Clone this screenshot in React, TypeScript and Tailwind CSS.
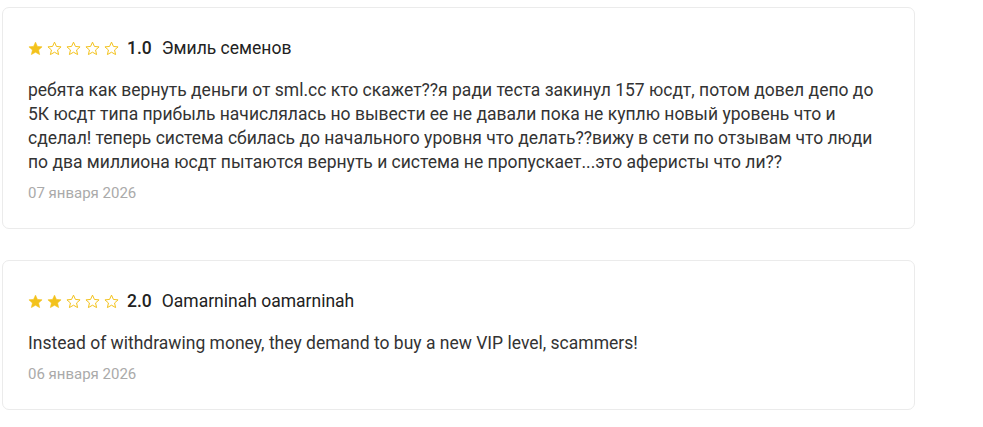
import React from "react";

const Star = ({ filled }: { filled: boolean }) => (
  <svg width="15" height="15" viewBox="0 0 24 24" className="block">
    <path
      d="M12 1.8l3.09 6.88 7.41.7-5.6 4.98 1.64 7.34L12 17.9l-6.54 3.8 1.64-7.34-5.6-4.98 7.41-.7z"
      fill={filled ? "#f3c21c" : "none"}
      stroke="#f3c21c"
      strokeWidth={filled ? 1 : 1.6}
      strokeLinejoin="round"
    />
  </svg>
);

type Review = { rating: number; name: string; text: string; date: string };

const reviews: Review[] = [
  {
    rating: 1,
    name: "Эмиль семенов",
    text: "ребята как вернуть деньги от sml.cc кто скажет??я ради теста закинул 157 юсдт, потом довел депо до 5К юсдт типа прибыль начислялась но вывести ее не давали пока не куплю новый уровень что и сделал! теперь система сбилась до начального уровня что делать??вижу в сети по отзывам что люди по два миллиона юсдт пытаются вернуть и система не пропускает...это аферисты что ли??",
    date: "07 января 2026",
  },
  {
    rating: 2,
    name: "Oamarninah oamarninah",
    text: "Instead of withdrawing money, they demand to buy a new VIP level, scammers!",
    date: "06 января 2026",
  },
];

export default function App() {
  return (
    <div
      className="min-h-[427px] bg-white pl-[2px] pt-[7px]"
      style={{ fontFamily: "Roboto, 'Noto Sans', sans-serif" }}
    >
      <div className="flex w-[913px] flex-col gap-[31px]">
        {reviews.map((r, i) => (
          <div
            key={i}
            className="rounded-[7px] border border-[#ebebeb] bg-white px-[25px] pb-[25px] pt-[28px]"
          >
            <div className="flex h-[24px] items-center">
              <div className="flex items-center gap-[4px]">
                {[1, 2, 3, 4, 5].map((n) => (
                  <Star key={n} filled={n <= r.rating} />
                ))}
              </div>
              <span className="ml-[8px] text-[17.5px] font-medium text-[#222]">
                {r.rating.toFixed(1)}
              </span>
              <span className="ml-[10px] text-[17.5px] text-[#222]">
                {r.name}
              </span>
            </div>
            <p className="mt-[18px] text-[17.5px] leading-[24px] text-[#333]">
              {r.text}
            </p>
            <div className="mt-[9px] text-[15px] leading-[20px] text-[#aaaaaa]">
              {r.date}
            </div>
          </div>
        ))}
      </div>
    </div>
  );
}
